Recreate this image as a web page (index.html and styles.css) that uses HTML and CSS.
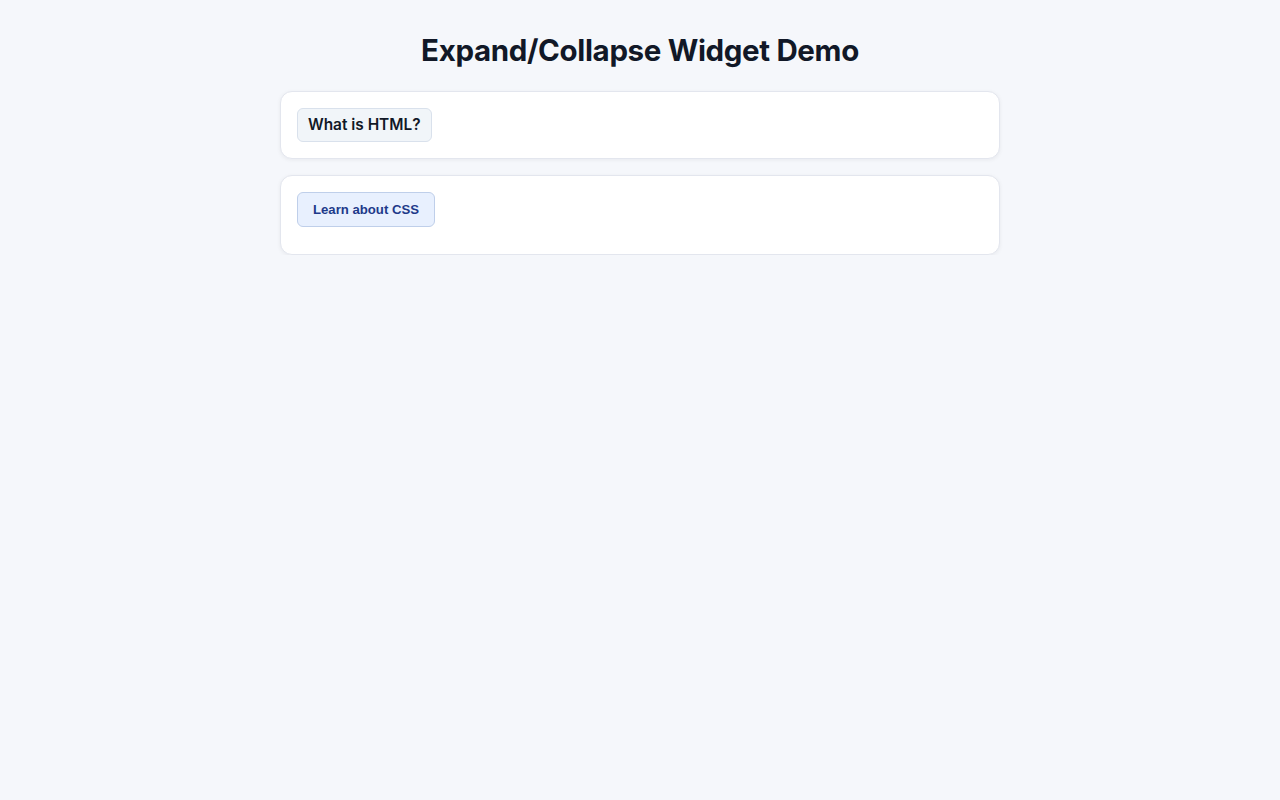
FILE: index.html
```html
<!DOCTYPE html>
<html lang="en">
<head>
<meta charset="utf-8">
<title>Expand/Collapse Widget Demo</title>
<link rel="stylesheet" href="styles.css">
</head>
<body>
<main class="page">
  <h1 class="title">Expand/Collapse Widget Demo</h1>
  <section class="card">
    <button class="toggle toggle-plain">What is HTML?</button>
  </section>
  <section class="card">
    <button class="toggle toggle-blue">Learn about CSS</button>
    <div class="panel"></div>
  </section>
</main>
</body>
</html>
```
FILE: styles.css
```css
html, body {
  margin: 0;
  padding: 0;
  background: #f5f7fb;
}
body {
  font-family: Inter, "Liberation Sans", Arial, sans-serif;
  color: #0f172a;
}
.page {
  width: 720px;
  margin: 0 auto;
  padding-top: 32px;
  display: flex;
  flex-direction: column;
  gap: 16px;
}
.title {
  margin: 0 0 7px;
  font-size: 29.5px;
  line-height: 36px;
  font-weight: 700;
  text-align: center;
  color: #111827;
  letter-spacing: -0.35px;
}
.card {
  background: #ffffff;
  border: 1px solid #e3e6ee;
  border-radius: 12px;
  padding: 16px;
  box-shadow: 0 1px 4px rgba(15, 23, 42, 0.06);
  display: flex;
  flex-direction: column;
  align-items: flex-start;
}
.toggle {
  cursor: pointer;
  border-radius: 6px;
  margin: 0;
}
.toggle-plain {
  font-family: Inter, "Liberation Sans", sans-serif;
  font-size: 15.4px;
  font-weight: 600;
  line-height: 20px;
  padding: 6px 10px;
  background: #f1f5f9;
  border: 1px solid #d9e1ec;
  color: #111827;
}
.toggle-blue {
  font-family: "Liberation Sans", Arial, sans-serif;
  font-size: 13.16px;
  font-weight: 700;
  line-height: 15px;
  padding: 9px 15px;
  background: #e8f0fe;
  border: 1px solid #bfcfea;
  color: #1e3a8a;
}
.panel {
  height: 0;
  margin-top: 11px;
  overflow: hidden;
}
```
